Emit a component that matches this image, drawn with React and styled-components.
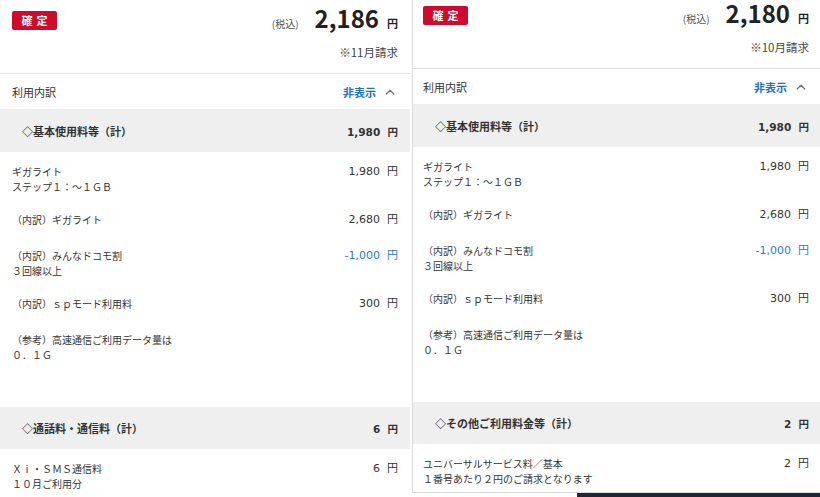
import React from 'react';
import styled, { createGlobalStyle } from 'styled-components';

const GlobalStyle = createGlobalStyle`
  html, body {
    margin: 0;
    padding: 0;
    background: #fff;
  }
  body {
    font-family: "Noto Sans CJK JP", "Noto Sans", sans-serif;
    color: #333;
    overflow: hidden;
  }
`;

const numberFont = '"DejaVu Sans", "Noto Sans CJK JP", sans-serif';

const bills = [
  {
    month: '※11月請求',
    total: '2,186',
    top: 11,
    sections: [
      {
        title: '◇基本使用料等（計）',
        amount: '1,980',
        items: [
          { lines: ['ギガライト', 'ステップ１：～１ＧＢ'], amount: '1,980' },
          { lines: ['（内訳）ギガライト'], amount: '2,680' },
          { lines: ['（内訳）みんなドコモ割', '３回線以上'], amount: '-1,000', minus: true },
          { lines: ['（内訳）ｓｐモード利用料'], amount: '300' },
          { lines: ['（参考）高速通信ご利用データ量は', '０．１Ｇ'] },
        ],
      },
      {
        title: '◇通話料・通信料（計）',
        amount: '6',
        items: [{ lines: ['Ｘｉ・ＳＭＳ通信料', '１０月ご利用分'], amount: '6' }],
      },
    ],
  },
  {
    month: '※10月請求',
    total: '2,180',
    top: 6,
    boxed: true,
    sections: [
      {
        title: '◇基本使用料等（計）',
        amount: '1,980',
        items: [
          { lines: ['ギガライト', 'ステップ１：～１ＧＢ'], amount: '1,980' },
          { lines: ['（内訳）ギガライト'], amount: '2,680' },
          { lines: ['（内訳）みんなドコモ割', '３回線以上'], amount: '-1,000', minus: true },
          { lines: ['（内訳）ｓｐモード利用料'], amount: '300' },
          { lines: ['（参考）高速通信ご利用データ量は', '０．１Ｇ'] },
        ],
      },
      {
        title: '◇その他ご利用料金等（計）',
        amount: '2',
        items: [
          { lines: ['ユニバーサルサービス料／基本', '１番号あたり２円のご請求となります'], amount: '2' },
        ],
      },
    ],
  },
];

const ChevronUp = () => (
  <svg width="10" height="6" viewBox="0 0 10 6" fill="none">
    <polyline points="1.2,5 5,1.3 8.8,5" stroke="#777" strokeWidth="1.3" strokeLinecap="round" strokeLinejoin="round" />
  </svg>
);

const BillPanel = ({ bill }) => {
  const padL = bill.boxed ? 10 : 12;
  const padR = bill.boxed ? 11 : 12;
  return (
    <Column $width={bill.boxed ? 408 : 410}>
      <Card $boxed={bill.boxed}>
        <Summary $top={bill.top} $l={padL} $r={padR}>
          <TopRow>
            <Badge>確定</Badge>
            <Price>
              <TaxNote>(税込)</TaxNote>
              <Total>{bill.total}</Total>
              <Yen>円</Yen>
            </Price>
          </TopRow>
          <Month>{bill.month}</Month>
        </Summary>
        <ToggleRow $l={padL} $r={padR}>
          <span>利用内訳</span>
          <Toggle>
            非表示
            <ChevronUp />
          </Toggle>
        </ToggleRow>
        {bill.sections.map((section, i) => (
          <Section key={i} $last={i === bill.sections.length - 1}>
            <SectionHead $r={padR}>
              <span>{section.title}</span>
              <HeadAmount>{section.amount}&nbsp;&nbsp;円</HeadAmount>
            </SectionHead>
            {section.items.map((item, j) => (
              <Item key={j} $l={padL} $r={padR}>
                <Label>
                  {item.lines.map((line, k) => (
                    <div key={k}>{line}</div>
                  ))}
                </Label>
                {item.amount && (
                  <Amount $minus={item.minus}>{item.amount}&nbsp;&nbsp;円</Amount>
                )}
              </Item>
            ))}
          </Section>
        ))}
      </Card>
      {bill.boxed && (
        <Strip>
          <DarkBar />
        </Strip>
      )}
    </Column>
  );
};

const App = () => (
  <>
    <GlobalStyle />
    <Page>
      {bills.map((bill, i) => (
        <BillPanel key={i} bill={bill} />
      ))}
    </Page>
  </>
);

const Page = styled.div`
  display: flex;
  gap: 2px;
  width: 820px;
  height: 497px;
  overflow: hidden;
  background: #fff;
`;

const Column = styled.div`
  display: flex;
  flex-direction: column;
  width: ${(p) => p.$width}px;
  flex-shrink: 0;
`;

const Card = styled.div`
  display: flex;
  flex-direction: column;
  border-left: ${(p) => (p.$boxed ? '1px solid #d8d8d8' : 'none')};
  border-bottom: ${(p) => (p.$boxed ? '1px solid #d8d8d8' : 'none')};
`;

const Summary = styled.div`
  padding: ${(p) => p.$top}px ${(p) => p.$r}px 13px ${(p) => p.$l}px;
  border-bottom: 1px solid #e2e2e2;
`;

const TopRow = styled.div`
  display: flex;
  justify-content: space-between;
  align-items: center;
  height: 19px;
`;

const Badge = styled.span`
  display: inline-flex;
  align-items: center;
  justify-content: center;
  width: 45px;
  height: 19px;
  background: #cf0a2c;
  color: #fff;
  border-radius: 2px;
  font-size: 11px;
  font-weight: 700;
  letter-spacing: 4px;
  text-indent: 4px;
  line-height: 19px;
`;

const Price = styled.div`
  display: flex;
  align-items: baseline;
  line-height: 19px;
  color: #222;
`;

const TaxNote = styled.span`
  font-size: 10px;
  color: #555;
  margin-right: 16px;
`;

const Total = styled.span`
  font-size: 24px;
  font-weight: 700;
`;

const Yen = styled.span`
  font-size: 11px;
  font-weight: 700;
  margin-left: 8px;
`;

const Month = styled.div`
  margin-top: 14px;
  text-align: right;
  font-size: 11.5px;
  line-height: 16px;
  color: #444;
`;

const ToggleRow = styled.div`
  display: flex;
  justify-content: space-between;
  align-items: center;
  height: 35px;
  padding: 0 ${(p) => p.$r}px 0 ${(p) => p.$l}px;
  border-bottom: 1px solid #eeeeee;
  font-size: 11px;
  color: #333;
`;

const Toggle = styled.span`
  display: inline-flex;
  align-items: center;
  gap: 9px;
  color: #1c6fc5;
  font-weight: 700;
  padding-right: 3px;
`;

const Section = styled.div`
  display: flex;
  flex-direction: column;
  padding-bottom: ${(p) => (p.$last ? 0 : 39)}px;
`;

const SectionHead = styled.div`
  display: flex;
  justify-content: space-between;
  align-items: center;
  height: 42px;
  padding: 0 ${(p) => p.$r}px 0 22px;
  background: #efefef;
  font-size: 11px;
  font-weight: 700;
  color: #333;
`;

const HeadAmount = styled.span`
  font-family: ${numberFont};
  font-size: 10.5px;
`;

const Item = styled.div`
  display: flex;
  justify-content: space-between;
  align-items: flex-start;
  padding: 12px ${(p) => p.$r}px 6px ${(p) => p.$l}px;
`;

const Label = styled.div`
  font-size: 10px;
  line-height: 15px;
  color: #333;
`;

const Amount = styled.div`
  font-family: ${numberFont};
  font-size: 11px;
  line-height: 15px;
  padding-bottom: 3px;
  color: ${(p) => (p.$minus ? '#2a7ad2' : '#333')};
  white-space: nowrap;
`;

const Strip = styled.div`
  display: flex;
  justify-content: flex-end;
`;

const DarkBar = styled.div`
  width: 243px;
  height: 5px;
  background: #1e2733;
`;

export default App;
